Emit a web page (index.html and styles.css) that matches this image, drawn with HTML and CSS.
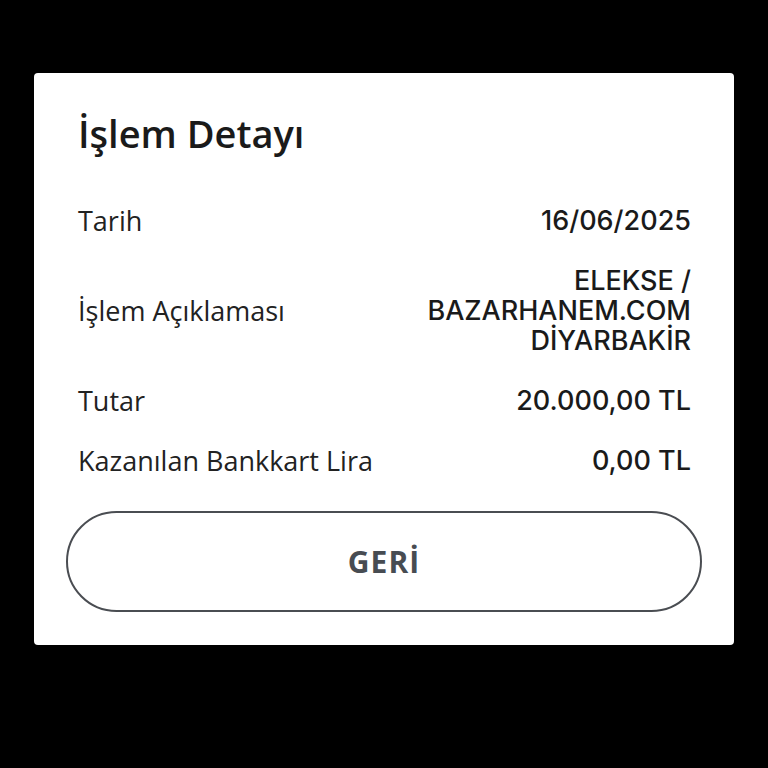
FILE: index.html
```html
<!DOCTYPE html>
<html lang="tr">
<head>
  <meta charset="UTF-8">
  <meta name="viewport" content="width=device-width, initial-scale=1.0">
  <title>İşlem Detayı</title>
  <link rel="stylesheet" href="styles.css">
</head>
<body>
  <!-- Detay kartı -->
  <main class="card">
    <h2 class="card-title">İşlem Detayı</h2>

    <div class="detail-list">
      <div class="detail-row">
        <span class="detail-label">Tarih</span>
        <span class="detail-value">16/06/2025</span>
      </div>
      <div class="detail-row">
        <span class="detail-label">İşlem Açıklaması</span>
        <span class="detail-value">ELEKSE /<br>BAZARHANEM.COM<br>DİYARBAKİR</span>
      </div>
      <div class="detail-row">
        <span class="detail-label">Tutar</span>
        <span class="detail-value">20.000,00 TL</span>
      </div>
      <div class="detail-row">
        <span class="detail-label">Kazanılan Bankkart Lira</span>
        <span class="detail-value">0,00 TL</span>
      </div>
    </div>

    <button type="button" class="button-back">GERİ</button>
  </main>
</body>
</html>
```

FILE: styles.css
```css
/* Estilos generales */
body {
  margin: 0;
  padding: 73px 34px 0;
  background-color: #000;
  font-family: "Open Sans", Arial, sans-serif;
  color: #1c1c1e;
}

/* Tarjeta */
.card {
  width: 700px;
  height: 572px;
  box-sizing: border-box;
  background-color: #fff;
  border-radius: 4px;
  padding: 32px 32px 0;
}

.card-title {
  margin: 0;
  padding: 0 12px;
  font-size: 38px;
  font-weight: 600;
  line-height: 56px;
  color: #1a1a1a;
}

/* Filas de detalle */
.detail-list {
  padding: 31px 11px 19px 12px;
}

.detail-row {
  display: flex;
  align-items: center;
  justify-content: space-between;
  padding: 14px 0 16px;
}

.detail-label {
  font-size: 27px;
  line-height: 30px;
  color: #222;
}

.detail-value {
  font-family: Inter, Arial, sans-serif;
  font-size: 27px;
  font-weight: 500;
  line-height: 30px;
  text-align: right;
  color: #1a1a1a;
}

/* Botón */
.button-back {
  display: block;
  width: 100%;
  height: 101px;
  background-color: #fff;
  border: 2px solid #4a4d52;
  border-radius: 51px;
  font-family: "Open Sans", Arial, sans-serif;
  font-size: 30px;
  font-weight: 700;
  letter-spacing: 1px;
  color: #474c52;
  cursor: pointer;
}
```
